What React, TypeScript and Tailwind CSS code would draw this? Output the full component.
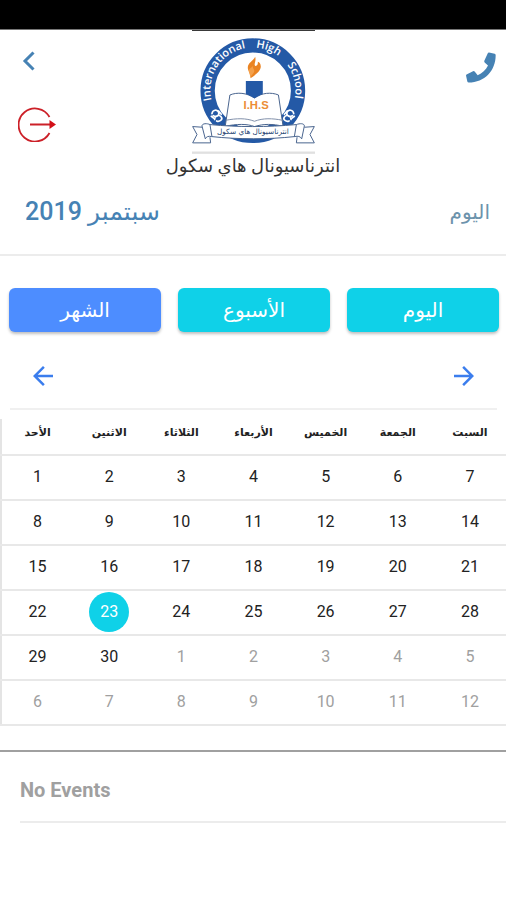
import { clsx } from 'clsx'
import { useState } from 'react'
import { MdArrowBack, MdArrowForward } from 'react-icons/md'

const WEEKDAYS = ['الأحد', 'الاثنين', 'الثلاثاء', 'الأربعاء', 'الخميس', 'الجمعة', 'السبت']

const MODES = [
  { id: 'month', label: 'الشهر' },
  { id: 'week', label: 'الأسبوع' },
  { id: 'day', label: 'اليوم' },
]

// September 2019 starts on a Sunday, the last two rows run into October
const DAYS = Array.from({ length: 42 }, (_, i) => ({
  day: i < 30 ? i + 1 : i - 29,
  outside: i >= 30,
}))
const WEEKS = Array.from({ length: 6 }, (_, i) => DAYS.slice(i * 7, i * 7 + 7))

function SchoolLogo() {
  return (
    <svg viewBox="36 15 370 372" className="h-[124px] w-[123px]" role="img" aria-label="International High School">
      <rect x="36" y="12" width="370" height="5" fill="#111" />
      <circle cx="219" cy="197" r="136" fill="#fff" stroke="#2459a6" strokeWidth="43" />
      <path id="ring" d="M99 240A128 128 0 1 1 339 240" fill="none" />
      <g fill="#fff" fontFamily="'Open Sans', sans-serif" fontWeight="600" fontSize="33">
        <text>
          <textPath href="#ring" startOffset="15">International</textPath>
        </text>
        <text>
          <textPath href="#ring" startOffset="256">High</textPath>
        </text>
        <text>
          <textPath href="#ring" startOffset="366">School</textPath>
        </text>
      </g>
      <g fill="none" stroke="#fff" strokeWidth="5" strokeLinecap="round">
        <path d="M96 266c2-12 16-14 20-4s-8 16-16 10M104 284c0-12 14-16 20-8s-6 16-14 12M94 274l10 8M116 258l8 10" />
        <path d="M342 266c-2-12-16-14-20-4s8 16 16 10M334 284c0-12-14-16-20-8s6 16 14 12M344 274l-10 8M322 258l-8 10" />
      </g>
      <path d="M226 95c-6 14-24 18-22 35 1 10 9 12 8 30 12-9 30-20 31-35 0-10-4-13-9-15 1 10-4 14-8 12-5-4 4-14 0-27z" fill="#ea8423" />
      <path d="M219 122c-2 9 6 10 4 18-2 7-10 10-11 20-1-12-5-16-5-22 0-8 8-9 12-16z" fill="#f4a04a" />
      <path d="M224 219c-24-16-52-18-74-9l-14 94c35-7 65-8 88 1 28-9 55-8 86-1l-14-94c-22-9-49-7-72 9z" fill="#fff" stroke="#49648f" strokeWidth="3" />
      <path d="M138 286c32-6 60-7 86 3 26-10 54-9 84-3" fill="none" stroke="#8190aa" strokeWidth="3" />
      <path d="M198 168h51v38l-25 14-26-14z" fill="#2459a6" />
      <text x="229" y="251" textAnchor="middle" fill="#ec8d35" fontFamily="'Liberation Sans', sans-serif" fontWeight="700" fontSize="34">
        I.H.S
      </text>
      <g fill="#fff" stroke="#49648f" strokeWidth="3" strokeLinejoin="round">
        <path d="M68 307l-30-2 13 24-13 25h54l-2-17" />
        <path d="M374 307l30-2-13 24 13 25h-54l2-17" />
        <path d="M66 303c0-8 16-8 24-4 84 8 172 8 260 0 10-4 24-4 24 4l-8 39c-4-8-12-9-20-7-82 9-168 9-252 0-8-2-15 0-18 7z" />
        <path d="M90 299l6 36M350 299l-6 36" />
      </g>
      <text x="219" y="327" textAnchor="middle" direction="rtl" fill="#243f70" fontFamily="'DejaVu Sans', sans-serif" fontSize="22">
        انترناسيونال هاي سكول
      </text>
      <rect x="36" y="380" width="370" height="7" fill="#e0e0e0" />
    </svg>
  )
}

function Header() {
  return (
    <header className="grid grid-cols-[1fr_auto_1fr] items-start">
      <div className="flex flex-col items-start gap-8 pt-5 pl-[18px]">
        <button type="button" aria-label="Back">
          <svg viewBox="0 0 24 24" className="h-6 w-6" fill="none" stroke="#4682b4" strokeWidth="3">
            <path d="M15.500 2.500L7 11l8.500 8.500" />
          </svg>
        </button>
        <button type="button" aria-label="Log out">
          <svg viewBox="0 0 38 36" className="h-9 w-[38px]" fill="none" stroke="#cc2028" strokeWidth="1.800">
            <path d="M31.500 11A16.500 16.500 0 1 0 31.500 27M12 18.500h20" />
            <path d="M31.500 14v9l6.500-4.500z" fill="#d20f18" stroke="none" />
          </svg>
        </button>
      </div>
      <div className="flex flex-col items-center">
        <SchoolLogo />
        <h1 dir="rtl" className="text-lg leading-6 text-[#333]">
          انترناسيونال هاي سكول
        </h1>
      </div>
      <div className="flex justify-end pt-[22px] pr-[10px]">
        <button type="button" aria-label="Call">
          <svg viewBox="30 28 90 92" className="h-[31px] w-[30px]" fill="#4682b4">
            <path d="M99 29l17 4q3 1 3 4c0 47-33 81-81 82q-3 0-4-3l-4-18q0-3 3-4l18-9q3-1 5 1l9 11c14-6 24-15 31-29l-10-9q-2-2-1-5l10-22q1-3 4-3z" />
          </svg>
        </button>
      </div>
    </header>
  )
}

function Calendar() {
  const [selected, setSelected] = useState(22)

  return (
    <table className="w-full table-fixed border-collapse border-l-2 border-[#e4e4e4] text-center">
      <thead>
        <tr className="h-9 border-b-2 border-[#e8e8e8]">
          {WEEKDAYS.map(name => (
            <th key={name} scope="col" className="p-0 pb-2 text-[11px] leading-4 font-bold text-[#222]">
              {name}
            </th>
          ))}
        </tr>
      </thead>
      <tbody>
        {WEEKS.map((week, w) => (
          <tr key={w} className="h-[45px] border-b-2 border-[#e8e8e8]">
            {week.map(({ day, outside }, d) => {
              const index = w * 7 + d
              return (
                <td key={index} className="p-0 pb-px">
                  <button
                    type="button"
                    onClick={() => setSelected(index)}
                    className={clsx(
                      'mx-auto flex h-10 w-10 items-center justify-center rounded-full text-base',
                      index === selected && 'bg-[#0fd1e8] text-white',
                      index !== selected && (outside ? 'text-[#a0a0a0]' : 'text-[#222]'),
                    )}
                  >
                    {day}
                  </button>
                </td>
              )
            })}
          </tr>
        ))}
      </tbody>
    </table>
  )
}

export default function App() {
  const [mode, setMode] = useState('month')

  return (
    <div className="flex min-h-screen flex-col bg-white font-[Roboto,'DejaVu_Sans',sans-serif]">
      <div className="h-[30px] border-b border-[#777] bg-black" />
      <Header />

      <div className="flex h-[78px] items-center justify-between border-b-2 border-[#ececec] pr-4 pl-[25px] text-[#4682b4]">
        <h2 dir="rtl" className="pb-2 text-[25px] leading-8 font-medium">
          سبتمبر 2019
        </h2>
        <button type="button" className="pb-2 text-xl text-[#6d93ac]">
          اليوم
        </button>
      </div>

      <div className="grid grid-cols-3 gap-[17px] pt-8 pr-[7px] pl-[9px]">
        {MODES.map(({ id, label }) => (
          <button
            key={id}
            type="button"
            onClick={() => setMode(id)}
            className={clsx(
              'h-11 rounded-md text-xl text-white shadow-[0_2px_3px_rgba(0,0,0,0.25)]',
              id === mode ? 'bg-[#4d8dff]' : 'bg-[#0fd1e8]',
            )}
          >
            {label}
          </button>
        ))}
      </div>

      <div className="mr-[9px] ml-[10px] flex h-[78px] items-center justify-between border-b-2 border-[#f0f0f0] px-[18px] text-[#3b7ded]">
        <button type="button" aria-label="Previous month" className="pt-3">
          <MdArrowBack size={30} />
        </button>
        <button type="button" aria-label="Next month" className="pt-3">
          <MdArrowForward size={30} />
        </button>
      </div>

      <div className="pt-[9px]">
        <Calendar />
      </div>

      <section className="mt-6 border-t-2 border-[#a0a0a0] pl-5">
        <p className="border-b-2 border-[#ececec] pt-6 pb-[17px] text-xl leading-7 font-bold text-[#a0a0a0]">No Events</p>
      </section>
    </div>
  )
}
